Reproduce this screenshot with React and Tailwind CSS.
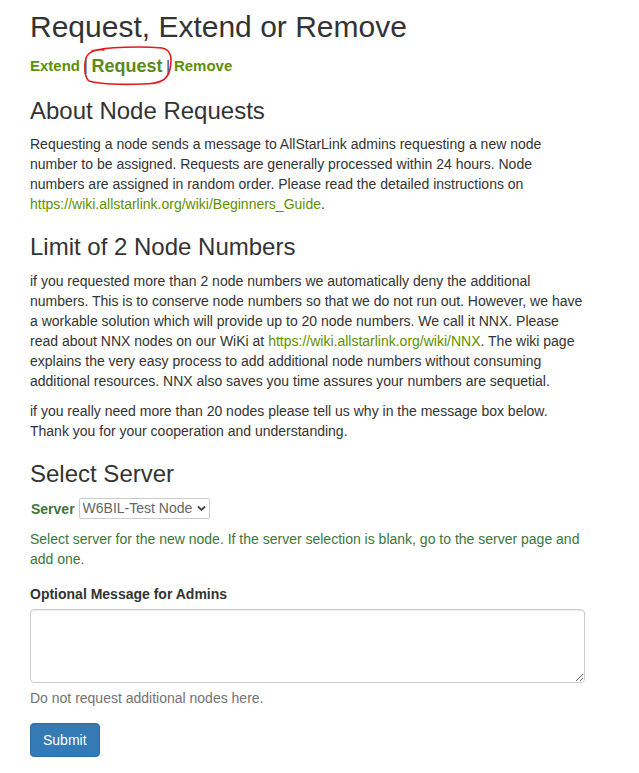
import React, { useState } from 'react';

const font = { fontFamily: '"Liberation Sans", Arial, sans-serif' };

function App() {
  const [server, setServer] = useState('w6bil');
  const [msg, setMsg] = useState('');

  return (
    <div className="min-h-screen bg-white text-[#333] text-[14px] leading-[20px] px-[30px] pt-[10px] pb-4" style={font}>
      <div className="w-[560px]">
        <h1 className="text-[30px] leading-[33px] font-normal mb-[10px]">Request, Extend or Remove</h1>

        <div className="relative h-[25px] flex items-center font-bold text-[15px] text-[#5f8f00]">
          <a href="#" className="hover:underline">Extend</a>
          <span className="text-[#333] font-normal text-[14px] whitespace-pre"> | </span>
          <a href="#" className="text-[18px] text-[#5a8a12] hover:underline">Request</a>
          <span className="text-[#333] font-normal text-[14px] whitespace-pre"> | </span>
          <a href="#" className="hover:underline">Remove</a>
          <svg className="absolute left-[52px] top-[-8px] pointer-events-none" width="92" height="42" viewBox="0 0 92 42">
            <path
              d="M10 6 C 24 2, 60 1, 80 3 C 90 5, 90 14, 88 24 C 86 34, 80 39, 60 39 C 40 40, 16 39, 7 36 C 2 32, 2 20, 4 13 C 6 7, 14 4, 22 5"
              fill="none"
              stroke="#e3191c"
              strokeWidth="1.6"
              strokeLinecap="round"
            />
          </svg>
        </div>

        <h3 className="text-[24px] leading-[26.4px] font-normal mt-[20px] mb-[10px]">About Node Requests</h3>
        <p className="mb-[10px]">
          Requesting a node sends a message to AllStarLink admins requesting a new node number to be assigned. Requests are generally processed within 24 hours. Node numbers are assigned in random order. Please read the detailed instructions on{' '}
          <a href="#" className="text-[#5f8f00] hover:underline">https://wiki.allstarlink.org/wiki/Beginners_Guide</a>.
        </p>

        <h3 className="text-[24px] leading-[26.4px] font-normal mt-[20px] mb-[10px]">Limit of 2 Node Numbers</h3>
        <p className="mb-[10px]">
          if you requested more than 2 node numbers we automatically deny the additional numbers. This is to conserve node numbers so that we do not run out. However, we have a workable solution which will provide up to 20 node numbers. We call it NNX. Please read about NNX nodes on our WiKi at{' '}
          <a href="#" className="text-[#5f8f00] hover:underline">https://wiki.allstarlink.org/wiki/NNX</a>. The wiki page explains the very easy process to add additional node numbers without consuming additional resources. NNX also saves you time assures your numbers are sequetial.
        </p>
        <p className="mb-[10px]">
          if you really need more than 20 nodes please tell us why in the message box below. Thank you for your cooperation and understanding.
        </p>

        <h3 className="text-[24px] leading-[26.4px] font-normal mt-[20px] mb-[10px]">Select Server</h3>
        <div className="flex items-center h-[23px]">
          <label className="font-bold text-[#3c763d] mr-[4px] ml-[1px]">Server</label>
          <div className="relative">
            <select
              value={server}
              onChange={(e) => setServer(e.target.value)}
              className="appearance-none h-[21px] w-[131px] border border-[#ccc] rounded-[2px] bg-white text-[#666] text-[14px] leading-[19px] pl-[3px] pr-[14px]"
              style={font}
            >
              <option value="w6bil">W6BIL-Test Node</option>
            </select>
            <svg className="absolute right-[4px] top-[7px] pointer-events-none" width="9" height="7" viewBox="0 0 9 7">
              <path d="M1 1.5 L4.5 5 L8 1.5" fill="none" stroke="#444" strokeWidth="1.8" />
            </svg>
          </div>
        </div>
        <p className="text-[#3c763d] mt-[9px] mb-[10px]">
          Select server for the new node. If the server selection is blank, go to the server page and add one.
        </p>

        <label className="block font-bold mt-[15px] mb-[5px]">Optional Message for Admins</label>
        <textarea
          value={msg}
          onChange={(e) => setMsg(e.target.value)}
          className="block w-[555px] h-[74px] border border-[#ccc] rounded-[4px] px-3 py-1.5 shadow-[inset_0_1px_1px_rgba(0,0,0,0.075)] focus:outline-none"
          style={font}
        />
        <p className="text-[#737373] mt-[5px]">Do not request additional nodes here.</p>

        <button
          type="submit"
          className="mt-[15px] h-[34px] px-[12px] bg-[#337ab7] border border-[#2e6da4] rounded-[4px] text-white text-[14px]"
          style={font}
        >
          Submit
        </button>
      </div>
    </div>
  );
}

export default App;
